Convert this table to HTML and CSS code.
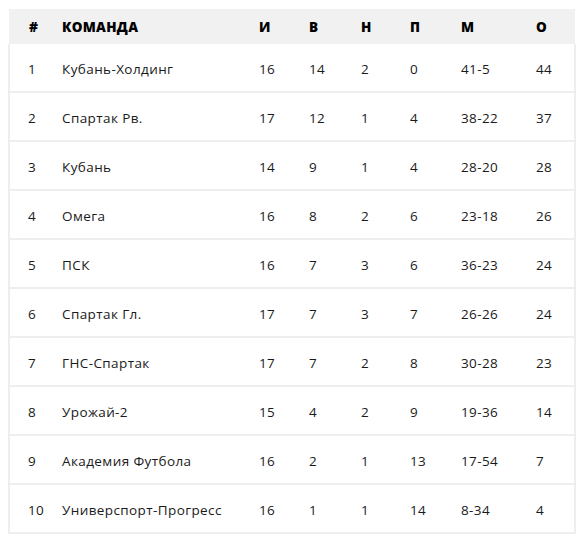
FILE: index.html
```html
<!DOCTYPE html>
<html lang="ru">
<head>
<meta charset="utf-8">
<link rel="stylesheet" href="styles.css">
</head>
<body>
<table class="standings">
  <colgroup>
    <col class="c-pos"><col class="c-team"><col class="c-n1"><col class="c-n2"><col class="c-n3"><col class="c-n4"><col class="c-goals"><col class="c-pts">
  </colgroup>
  <thead>
    <tr><th>#</th><th>КОМАНДА</th><th>И</th><th>В</th><th>Н</th><th>П</th><th>М</th><th>О</th></tr>
  </thead>
  <tbody>
    <tr><td>1</td><td>Кубань-Холдинг</td><td>16</td><td>14</td><td>2</td><td>0</td><td>41-5</td><td>44</td></tr>
    <tr><td>2</td><td>Спартак Рв.</td><td>17</td><td>12</td><td>1</td><td>4</td><td>38-22</td><td>37</td></tr>
    <tr><td>3</td><td>Кубань</td><td>14</td><td>9</td><td>1</td><td>4</td><td>28-20</td><td>28</td></tr>
    <tr><td>4</td><td>Омега</td><td>16</td><td>8</td><td>2</td><td>6</td><td>23-18</td><td>26</td></tr>
    <tr><td>5</td><td>ПСК</td><td>16</td><td>7</td><td>3</td><td>6</td><td>36-23</td><td>24</td></tr>
    <tr><td>6</td><td>Спартак Гл.</td><td>17</td><td>7</td><td>3</td><td>7</td><td>26-26</td><td>24</td></tr>
    <tr><td>7</td><td>ГНС-Спартак</td><td>17</td><td>7</td><td>2</td><td>8</td><td>30-28</td><td>23</td></tr>
    <tr><td>8</td><td>Урожай-2</td><td>15</td><td>4</td><td>2</td><td>9</td><td>19-36</td><td>14</td></tr>
    <tr><td>9</td><td>Академия Футбола</td><td>16</td><td>2</td><td>1</td><td>13</td><td>17-54</td><td>7</td></tr>
    <tr><td>10</td><td>Универспорт-Прогресс</td><td>16</td><td>1</td><td>1</td><td>14</td><td>8-34</td><td>4</td></tr>
  </tbody>
</table>
</body>
</html>
```
FILE: styles.css
```css
html, body {
  margin: 0;
  padding: 0;
  background: #ffffff;
}

body {
  font-family: "Open Sans", "Noto Sans", sans-serif;
  color: #1a1a1a;
}

.standings {
  margin: 9px 0 0 8px;
  width: 566px;
  border-collapse: collapse;
  table-layout: fixed;
}

.c-pos { width: 53px; }
.c-team { width: 197px; }
.c-n1 { width: 50px; }
.c-n2 { width: 52px; }
.c-n3 { width: 49px; }
.c-n4 { width: 51px; }
.c-goals { width: 75px; }
.c-pts { width: 39px; }

.standings th,
.standings td {
  padding: 0;
  text-align: left;
  white-space: nowrap;
}

.standings th:first-child {
  padding-left: 20px;
}

.standings thead th {
  height: 35px;
  background: #f1f1f1;
  font-size: 13.5px;
  font-weight: 800;
  color: #000;
  letter-spacing: 0.3px;
}

.standings tbody td {
  height: 45px;
  padding-top: 2px;
  font-size: 13.5px;
  font-weight: 400;
  letter-spacing: 0.4px;
  border-bottom: 2px solid #eeeeee;
}

.standings tbody td:first-child {
  border-left: 2px solid #eeeeee;
  padding-left: 18px;
}

.standings tbody td:last-child {
  border-right: 2px solid #eeeeee;
}
```
